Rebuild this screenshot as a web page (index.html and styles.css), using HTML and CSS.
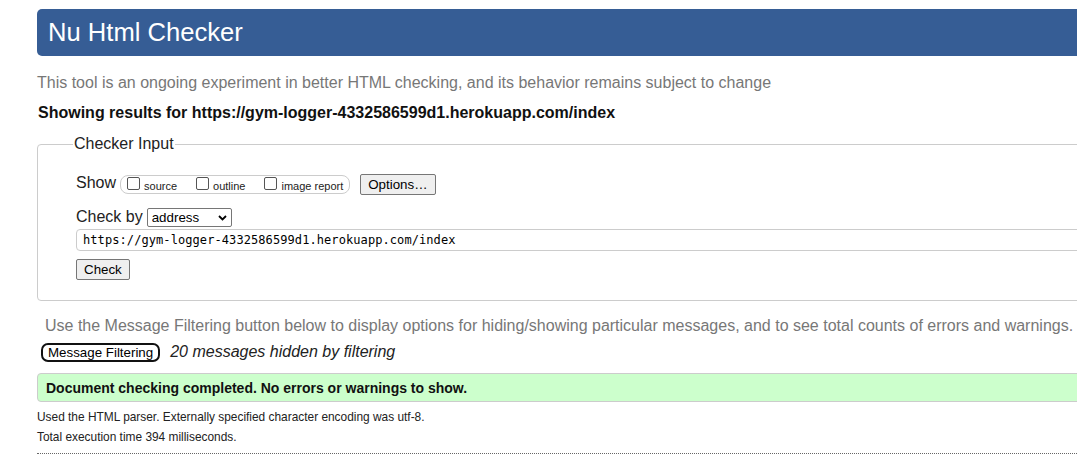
FILE: index.html
```html
<!DOCTYPE html>
<html lang="en">
<head>
<meta charset="utf-8">
<title>Nu Html Checker</title>
<link rel="stylesheet" href="styles.css">
</head>
<body>
<div class="page">
  <h1 class="masthead">Nu Html Checker</h1>
  <p class="intro">This tool is an ongoing experiment in better HTML checking, and its behavior remains subject to change</p>
  <p class="results-for">Showing results for https://gym-logger-4332586599d1.herokuapp.com/index</p>
  <form class="checker">
    <fieldset class="checker-input">
      <legend>Checker Input</legend>
      <div class="show-row">
        <span class="row-label">Show</span>
        <span class="show-group">
          <label class="opt"><span class="cb"></span>source</label>
          <label class="opt"><span class="cb"></span>outline</label>
          <label class="opt"><span class="cb"></span>image report</label>
        </span>
        <button type="button" class="btn btn-options">Options…</button>
      </div>
      <div class="by-row">
        <span class="row-label">Check by</span>
        <span class="select-wrap">
          <select class="select"><option>address</option></select>
          <svg class="chevron" width="9" height="6" viewBox="0 0 9 6"><path d="M1 1 L4.5 4.5 L8 1" fill="none" stroke="#000" stroke-width="1.8"/></svg>
        </span>
      </div>
      <input class="url" type="text" value="https://gym-logger-4332586599d1.herokuapp.com/index">
      <button type="button" class="btn btn-check">Check</button>
    </fieldset>
  </form>
  <p class="filter-hint">Use the Message Filtering button below to display options for hiding/showing particular messages, and to see total counts of errors and warnings.</p>
  <div class="filter-row">
    <button type="button" class="filter-btn">Message Filtering</button>
    <em class="hidden-count">20 messages hidden by filtering</em>
  </div>
  <div class="success">Document checking completed. No errors or warnings to show.</div>
  <p class="meta meta-first">Used the HTML parser. Externally specified character encoding was utf-8.</p>
  <p class="meta">Total execution time 394 milliseconds.</p>
  <hr class="rule">
</div>
</body>
</html>
```

FILE: styles.css
```css
html, body {
  margin: 0;
  background: #fff;
  overflow: hidden;
}
body {
  font-family: "Liberation Sans", Arial, sans-serif;
  color: #000;
}
.page {
  width: 1100px;
  padding: 9px 0 0 37px;
}
.masthead {
  margin: 0;
  height: 47px;
  line-height: 47px;
  padding-left: 11px;
  font-size: 25.6px;
  font-weight: normal;
  color: #fff;
  background: #365d95;
  border-radius: 5px 0 0 5px;
}
.intro {
  margin: 17px 0 0;
  font-size: 16px;
  line-height: 20px;
  color: #777;
}
.results-for {
  margin: 10px 0 0;
  padding-left: 1px;
  font-size: 16px;
  line-height: 20px;
  font-weight: bold;
  color: #111;
}
.checker {
  margin: 12px 0 0;
}
.checker-input {
  margin: 0;
  min-width: 0;
  padding: 21px 0 20px 38px;
  border: 1px solid #ccc;
  border-radius: 4px;
}
.checker-input legend {
  margin-left: -3px;
  padding: 0 1px;
  font-size: 16px;
  line-height: 18px;
  color: #222;
}
.show-row {
  display: flex;
  align-items: center;
  height: 21px;
}
.row-label {
  margin: 0 4px 3px 0;
  font-size: 16px;
  line-height: 16px;
  color: #222;
}
.show-group {
  display: flex;
  align-items: center;
  height: 17px;
  padding: 0 6px 0 6px;
  border: 1px solid #ccc;
  border-radius: 8px;
}
.opt {
  display: flex;
  align-items: baseline;
  margin-right: 19px;
  font-size: 11px;
  line-height: 13px;
  color: #222;
}
.opt:last-child {
  margin-right: 0;
}
.cb {
  width: 11px;
  height: 11px;
  margin-right: 4px;
  border: 1px solid #555;
  border-radius: 2px;
  background: #fff;
}
.btn {
  box-sizing: border-box;
  height: 21px;
  padding: 0 7px;
  font: 13.33px "Liberation Sans", Arial, sans-serif;
  color: #000;
  background: #efefef;
  border: 1px solid #767676;
  border-radius: 2px;
}
.btn-options {
  margin-left: 10px;
}
.by-row {
  display: flex;
  align-items: center;
  height: 19px;
  margin-top: 13px;
}
.by-row .row-label {
  margin-bottom: 2px;
}
.select-wrap {
  position: relative;
  display: block;
}
.select {
  display: block;
  box-sizing: border-box;
  width: 85px;
  height: 19px;
  margin: 0;
  padding: 0 0 0 4px;
  font: 13.33px "Liberation Sans", Arial, sans-serif;
  color: #000;
  background: #fff;
  border: 1px solid #767676;
  border-radius: 2px;
  appearance: none;
  -webkit-appearance: none;
}
.chevron {
  position: absolute;
  right: 5px;
  top: 7px;
}
.url {
  display: block;
  box-sizing: border-box;
  width: 1100px;
  height: 22px;
  margin: 2px 0 0;
  padding: 0 6px;
  font: 12px "DejaVu Sans Mono", "Liberation Mono", monospace;
  letter-spacing: 0.08px;
  color: #000;
  border: 1px solid #ccc;
  border-radius: 4px;
}
.btn-check {
  display: block;
  margin-top: 8px;
}
.filter-hint {
  margin: 15px 0 0;
  padding-left: 8px;
  font-size: 16px;
  line-height: 20px;
  color: #777;
  white-space: nowrap;
}
.filter-row {
  display: flex;
  align-items: baseline;
  gap: 10px;
  margin-top: 7px;
  padding-left: 4px;
}
.filter-btn {
  box-sizing: border-box;
  height: 19px;
  padding: 0 5px;
  font: 13.33px/15px "Liberation Sans", Arial, sans-serif;
  color: #000;
  background: #fff;
  border: 2px solid #111;
  border-radius: 7px;
}
.hidden-count {
  font-size: 16px;
  color: #222;
}
.success {
  margin-top: 11px;
  padding: 6px 8px 5px;
  font-size: 14px;
  line-height: 16px;
  font-weight: bold;
  color: #111;
  background: #ccffcc;
  border: 1px solid #ccc;
  border-radius: 4px;
}
.meta {
  margin: 0;
  font-size: 11.9px;
  line-height: 20px;
  color: #222;
}
.meta-first {
  margin-top: 5px;
}
.rule {
  height: 0;
  margin: 6px 0 0;
  border: 0;
  border-top: 1px dotted #666;
}
```
